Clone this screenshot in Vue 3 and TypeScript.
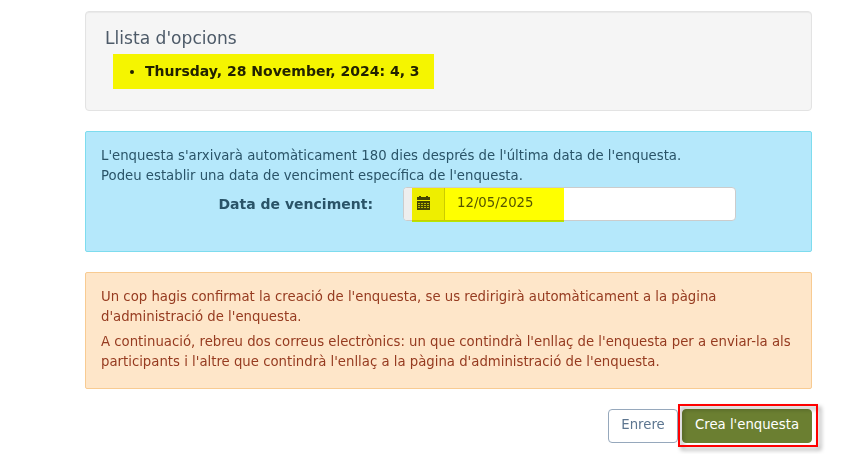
<script setup lang="ts">
import { ref } from 'vue'

const options: string[] = ['Thursday, 28 November, 2024: 4, 3']
const expiry = ref<string>('12/05/2025')
const gridRows: number[] = [7, 9, 11]
const gridCols: number[] = [1, 4, 7, 10]
</script>

<template>
  <main class="page">
    <section class="well">
      <h4 class="title">Llista d'opcions</h4>
      <ul class="options">
        <li v-for="option in options" :key="option">{{ option }}</li>
      </ul>
      <span class="marker marker-list"></span>
    </section>

    <section class="alert info">
      <p>L'enquesta s'arxivarà automàticament 180 dies després de l'última data de l'enquesta.<br />Podeu establir una data de venciment específica de l'enquesta.</p>
      <div class="form-row">
        <label class="label" for="expiry">Data de venciment:</label>
        <div class="input-group">
          <span class="addon">
            <svg width="14" height="14" viewBox="0 0 14 14" shape-rendering="crispEdges">
              <path d="M0 1h2V0h2v1h5V0h2v1h2v3H0zM0 5h13v9H0z" fill="#444" />
              <template v-for="y in gridRows" :key="y">
                <rect v-for="x in gridCols" :key="x" :x="x" :y="y" width="2" height="1" fill="#bbb" />
              </template>
            </svg>
          </span>
          <input id="expiry" v-model="expiry" type="text" class="input" />
          <span class="marker marker-date"></span>
        </div>
      </div>
    </section>

    <section class="alert warning">
      <p>Un cop hagis confirmat la creació de l'enquesta, se us redirigirà automàticament a la pàgina d'administració de l'enquesta.</p>
      <p>A continuació, rebreu dos correus electrònics: un que contindrà l'enllaç de l'enquesta per a enviar-la als participants i l'altre que contindrà l'enllaç a la pàgina d'administració de l'enquesta.</p>
    </section>

    <div class="actions">
      <button type="button" class="btn back">Enrere</button>
      <div class="primary-wrap">
        <button type="button" class="btn primary">Crea l'enquesta</button>
        <span class="frame"></span>
      </div>
    </div>
  </main>
</template>

<style>
body {
  margin: 0;
  background: #fff;
}
</style>

<style scoped>
.page {
  box-sizing: border-box;
  width: 812px;
  height: 454px;
  padding: 11px 0 0 85px;
  font: 13.28px/20px "DejaVu Sans", sans-serif;
  color: #222;
}
.well {
  position: relative;
  box-sizing: border-box;
  height: 100px;
  padding: 16px 19px;
  margin-bottom: 20px;
  background: #f5f5f5;
  border: 1px solid #e3e3e3;
  border-radius: 4px;
  box-shadow: inset 0 1px 1px rgba(0, 0, 0, 0.05);
}
.title {
  margin: 0 0 12px;
  font-size: 17.1px;
  line-height: 21px;
  font-weight: 400;
  color: #4d5a68;
}
.options {
  margin: 0;
  padding: 0 0 0 40px;
  font-size: 14px;
  font-weight: 700;
}
.marker {
  position: absolute;
  background: #ff0;
  mix-blend-mode: multiply;
  pointer-events: none;
}
.marker-list {
  left: 27px;
  top: 42px;
  width: 321px;
  height: 35px;
}
.alert {
  box-sizing: border-box;
  padding: 14px 15px 15px;
  margin-bottom: 20px;
  border: 1px solid;
  border-radius: 2px;
}
.alert p {
  margin: 0;
}
.alert p + p {
  margin-top: 5px;
}
.info {
  height: 121px;
  color: #2a5468;
  background: #b5e8fb;
  border-color: #7edcee;
}
.warning {
  height: 117px;
  color: #963b20;
  background: #fee6c9;
  border-color: #f8cb92;
}
.form-row {
  display: flex;
  gap: 30px;
  margin-top: 1px;
}
.label {
  width: 272px;
  padding-top: 7px;
  font-size: 14px;
  font-weight: 700;
  text-align: right;
}
.input-group {
  position: relative;
  box-sizing: border-box;
  display: flex;
  width: 333px;
  height: 34px;
  border: 1px solid #ccc;
  border-radius: 4px;
  background: #fff;
}
.addon {
  box-sizing: border-box;
  display: flex;
  width: 41px;
  padding: 8px 0 0 13px;
  background: #eee;
  border-right: 1px solid #ccc;
  border-radius: 3px 0 0 3px;
}
.input {
  flex: 1;
  min-width: 0;
  box-sizing: border-box;
  padding: 0 12px 3px;
  border: 0;
  background: transparent;
  font: inherit;
  color: #555;
  outline: none;
}
.marker-date {
  left: 8px;
  top: 0;
  width: 152px;
  height: 34px;
}
.actions {
  display: flex;
  justify-content: flex-end;
  gap: 4px;
}
.btn {
  box-sizing: border-box;
  height: 34px;
  padding: 0 0 2px;
  border: 1px solid;
  border-radius: 4px;
  font: inherit;
}
.back {
  width: 70px;
  color: #5d7690;
  background: #fff;
  border-color: #96a8bc;
}
.primary-wrap {
  position: relative;
}
.primary {
  display: block;
  width: 130px;
  color: #fff;
  background: #6b7f31;
  border-color: #6b7f31;
}
.frame {
  position: absolute;
  box-sizing: border-box;
  left: -4px;
  top: -5px;
  width: 140px;
  height: 43px;
  border: 2px solid #f00;
  filter: drop-shadow(3px 3px 2px rgba(0, 0, 0, 0.4));
  pointer-events: none;
}
</style>
